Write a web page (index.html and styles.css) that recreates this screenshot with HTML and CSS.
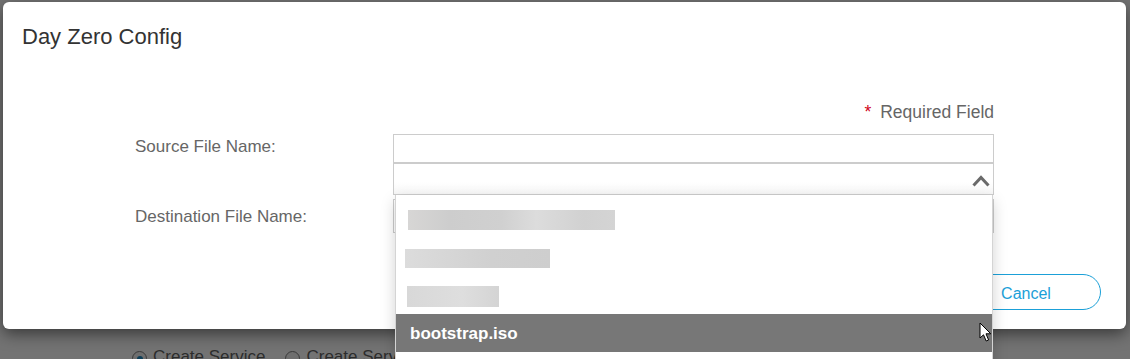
FILE: index.html
```html
<!DOCTYPE html>
<html lang="en">
<head>
    <meta charset="UTF-8">
    <meta name="viewport" content="width=device-width, initial-scale=1.0">
    <title>Day Zero Config</title>
    <link rel="stylesheet" href="styles.css">
</head>
<body>
    <div class="page">
        <div class="modal">
            <div class="modal-header">
                <h4>Day Zero Config</h4>
            </div>

            <div class="modal-body">
                <div class="required-note"><span class="star">*</span> Required Field</div>

                <div class="form-row">
                    <label>Source File Name:</label>
                    <div class="field">
                        <input type="text" class="text-input">
                        <div class="combo">
                            <div class="select-box">
                                <svg class="chevron" width="18" height="12" viewBox="0 0 18 12">
                                    <polyline points="1.5,10.5 9,2.5 16.5,10.5" fill="none" stroke="#6a6a6a" stroke-width="3"/>
                                </svg>
                            </div>
                            <ul class="dropdown-menu">
                                <li><span class="redacted bar-1"></span></li>
                                <li><span class="redacted bar-2"></span></li>
                                <li><span class="redacted bar-3"></span></li>
                                <li class="active">bootstrap.iso</li>
                                <li></li>
                            </ul>
                        </div>
                    </div>
                </div>

                <div class="form-row dest-row">
                    <label>Destination File Name:</label>
                    <div class="field">
                        <input type="text" class="text-input tall">
                    </div>
                </div>
            </div>

            <div class="modal-footer">
                <button class="btn-cancel">Cancel</button>
            </div>
        </div>

        <div class="behind-row">
            <span class="radio checked"></span><span class="radio-label">Create Service</span>
            <span class="radio"></span><span class="radio-label">Create Service from Template</span>
        </div>

        <svg class="cursor" width="14" height="21" viewBox="0 0 14 21">
            <path d="M1 1 L1 16 L4.5 12.8 L7.2 19 L9.6 18 L7 11.8 L11.8 11.8 Z" fill="#fff" stroke="#000" stroke-width="1" stroke-linejoin="round"/>
        </svg>
    </div>
</body>
</html>
```

FILE: styles.css
```css
* {
    margin: 0;
    padding: 0;
    box-sizing: border-box;
}

html, body {
    height: 359px;
    overflow: hidden;
}

body {
    font-family: 'Liberation Sans', Arial, sans-serif;
    background: #737373;
    color: #333;
}

.page {
    position: relative;
    padding: 2px 4px 0 3px;
}

.modal {
    background: white;
    border-radius: 6px;
    box-shadow: 0 5px 15px rgba(0,0,0,0.5);
}

.modal-header {
    padding: 22px 19px 0;
}

.modal-header h4 {
    font-size: 22px;
    line-height: 26px;
    font-weight: normal;
    color: #333;
}

.modal-body {
    padding: 51px 132px 0;
}

.required-note {
    text-align: right;
    font-size: 17.5px;
    line-height: 20px;
    color: #666;
    margin-bottom: 13px;
    padding-top: 1px;
    height: 20px;
}

.required-note .star {
    color: #d0021b;
    margin-right: 4px;
}

.form-row {
    display: grid;
    grid-template-columns: 258px 1fr;
}

.form-row label {
    font-size: 17px;
    line-height: 20px;
    color: #666;
    padding-top: 3px;
}

.dest-row {
    margin-top: 4px;
}

.dest-row label {
    padding-top: 8px;
}

.text-input {
    display: block;
    width: 100%;
    height: 29px;
    border: 1px solid #ccc;
    font-size: 16px;
    outline: none;
}

.text-input.tall {
    height: 34px;
}

.combo {
    position: relative;
}

.select-box {
    height: 33px;
    border: 1px solid #ccc;
    border-top: 2px solid #ccc;
    margin-top: -1px;
    background: linear-gradient(#fff 60%, #f6f6f6);
    display: flex;
    align-items: center;
    justify-content: flex-end;
    padding: 3px 3px 0 0;
}

.dropdown-menu {
    position: absolute;
    top: 100%;
    left: 2px;
    right: 1px;
    z-index: 10;
    list-style: none;
    background: white;
    border: 1px solid #d4d4d4;
    border-top: none;
    box-shadow: 0 6px 14px rgba(0,0,0,0.18);
    padding-top: 6.5px;
}

.dropdown-menu li {
    height: 37.5px;
    display: flex;
    align-items: center;
    padding-left: 14px;
    font-size: 17px;
}

.dropdown-menu li.active {
    background: #777;
    color: white;
    font-weight: bold;
    padding-top: 3px;
}

.redacted {
    display: block;
    background: linear-gradient(90deg, #d7d6d5 0%, #cdcdcd 20%, #d0d0d0 45%, #dcdcdc 62%, #d1d1d1 85%, #d4d4d4 100%);
}

.bar-1 {
    width: 207px;
    height: 20px;
    margin-left: -2px;
}

.bar-2 {
    width: 145px;
    height: 19px;
    margin-left: -5px;
    margin-top: 1px;
    background: linear-gradient(90deg, #dcdcdc, #d0d0d0 60%, #cecece);
}

.bar-3 {
    width: 92px;
    height: 21px;
    margin-left: -3px;
    margin-top: 2px;
    background: linear-gradient(90deg, #d8d8d8, #dedede 60%, #d4d4d4);
}

.modal-footer {
    display: flex;
    justify-content: flex-end;
    padding: 41px 25px 19px;
}

.btn-cancel {
    height: 36px;
    width: 150px;
    border: 1px solid #1ba0d8;
    border-radius: 18px;
    background: white;
    color: #1ba0d8;
    font-family: inherit;
    font-size: 16px;
    padding-top: 3px;
}

.behind-row {
    display: flex;
    align-items: center;
    margin-top: 18px;
    padding-left: 129px;
    font-size: 17px;
    line-height: 20px;
    color: #2c2c2c;
}

.radio {
    width: 15px;
    height: 15px;
    border-radius: 50%;
    border: 1px solid #3a3a3a;
    background: #6e6e6e;
    margin-right: 6px;
    margin-top: 3px;
    position: relative;
}

.radio.checked::after {
    content: '';
    position: absolute;
    left: 3.5px;
    top: 3.5px;
    width: 6px;
    height: 6px;
    border-radius: 50%;
    background: #0d3d57;
}

.radio-label {
    margin-right: 20px;
}

.cursor {
    position: absolute;
    left: 979px;
    top: 322px;
    z-index: 20;
}
```
